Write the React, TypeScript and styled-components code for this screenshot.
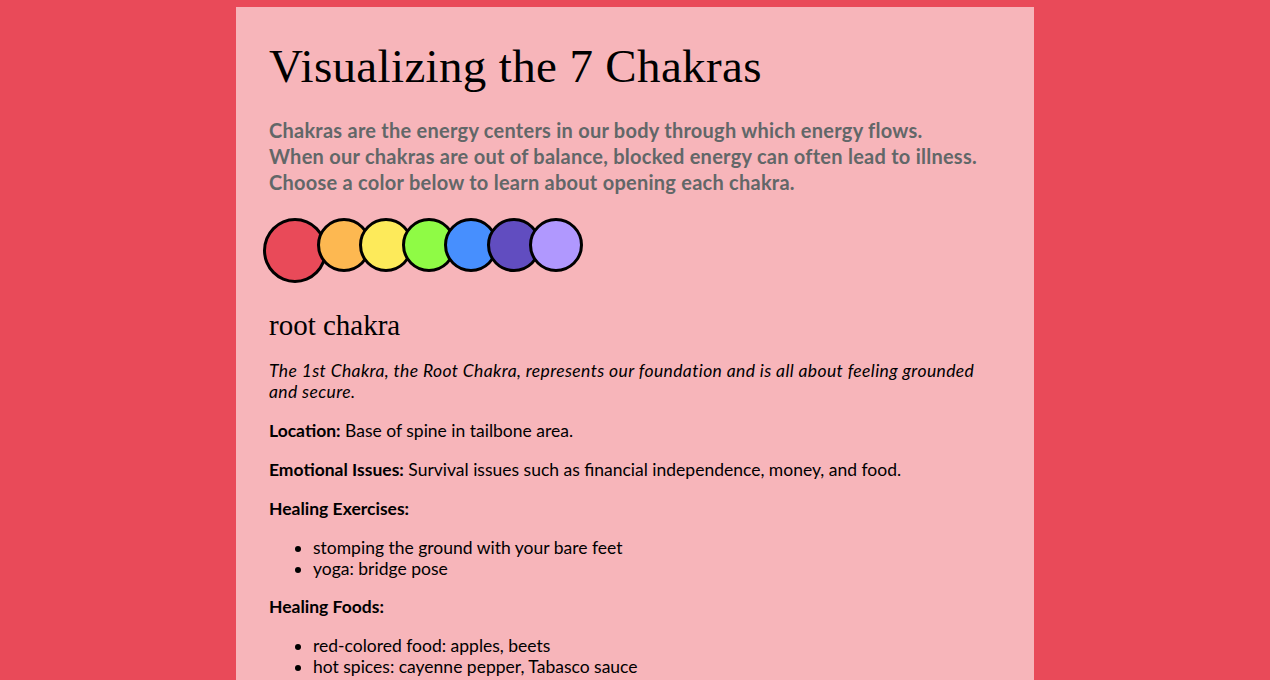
import React from "react";
import styled, { createGlobalStyle } from "styled-components";

const Global = createGlobalStyle`
  html, body { margin: 0; padding: 0; background: #e94a59; }
  body { font-family: "Lato", "Open Sans", sans-serif; color: #000; }
`;

const Page = styled.main`
  width: 798px;
  margin: 7px auto 0;
  background: #f7b5ba;
  padding: 30px 33px 40px;
  box-sizing: border-box;
  min-height: 700px;
`;

const Title = styled.h1`
  font-family: "Liberation Serif", serif;
  font-weight: 400;
  font-size: 47px;
  line-height: 58px;
  margin: 0 0 22px;
  letter-spacing: 0.35px;
`;

const Intro = styled.p`
  font-size: 20px;
  line-height: 26px;
  font-weight: 700;
  letter-spacing: 0.25px;
  color: #626768;
  margin: 0 0 23px;
`;

const Swatches = styled.div`
  display: flex;
  align-items: flex-start;
  margin-left: -6px;
  margin-bottom: 26px;
`;

const Swatch = styled.button<{ $color: string; $active?: boolean; $overlap: number }>`
  flex: none;
  box-sizing: border-box;
  width: ${(p) => (p.$active ? 64 : 54)}px;
  height: ${(p) => (p.$active ? 65 : 54)}px;
  border-radius: 50%;
  border: 3px solid #000;
  background: ${(p) => p.$color};
  margin-left: ${(p) => -p.$overlap}px;
  padding: 0;
  cursor: pointer;
`;

const Heading = styled.h2`
  font-family: "Liberation Serif", serif;
  font-weight: 400;
  font-size: 29px;
  line-height: 32px;
  margin: 0 0 19px;
`;

const Para = styled.p<{ $italic?: boolean }>`
  font-size: 17.5px;
  line-height: 21px;
  margin: 0 0 18px;
  font-style: ${(p) => (p.$italic ? "italic" : "normal")};
  letter-spacing: ${(p) => (p.$italic ? "0.38px" : "0")};
`;

const List = styled.ul`
  font-size: 17.5px;
  line-height: 21px;
  margin: 0 0 17px;
  padding-left: 44px;
`;

const colors = ["#e94a59", "#fdb851", "#fdea5a", "#8ffb45", "#478ffe", "#614dc0", "#b098fe"];

export default function App() {
  return (
    <>
      <Global />
      <Page>
        <Title>Visualizing the 7 Chakras</Title>
        <Intro>
          Chakras are the energy centers in our body through which energy flows.
          <br />
          When our chakras are out of balance, blocked energy can often lead to illness.
          <br />
          Choose a color below to learn about opening each chakra.
        </Intro>
        <Swatches>
          {colors.map((c, i) => (
            <Swatch
              key={c}
              $color={c}
              $active={i === 0}
              $overlap={i === 0 ? 0 : i === 1 ? 10 : 11.6}
              aria-label={`chakra ${i + 1}`}
            />
          ))}
        </Swatches>
        <Heading>root chakra</Heading>
        <Para $italic>
          The 1st Chakra, the Root Chakra, represents our foundation and is all about feeling grounded and secure.
        </Para>
        <Para>
          <b>Location:</b> Base of spine in tailbone area.
        </Para>
        <Para>
          <b>Emotional Issues:</b> Survival issues such as financial independence, money, and food.
        </Para>
        <Para>
          <b>Healing Exercises:</b>
        </Para>
        <List>
          <li>stomping the ground with your bare feet</li>
          <li>yoga: bridge pose</li>
        </List>
        <Para>
          <b>Healing Foods:</b>
        </Para>
        <List>
          <li>red-colored food: apples, beets</li>
          <li>hot spices: cayenne pepper, Tabasco sauce</li>
          <li>protein-rich foods: eggs, meat, beans</li>
        </List>
      </Page>
    </>
  );
}
